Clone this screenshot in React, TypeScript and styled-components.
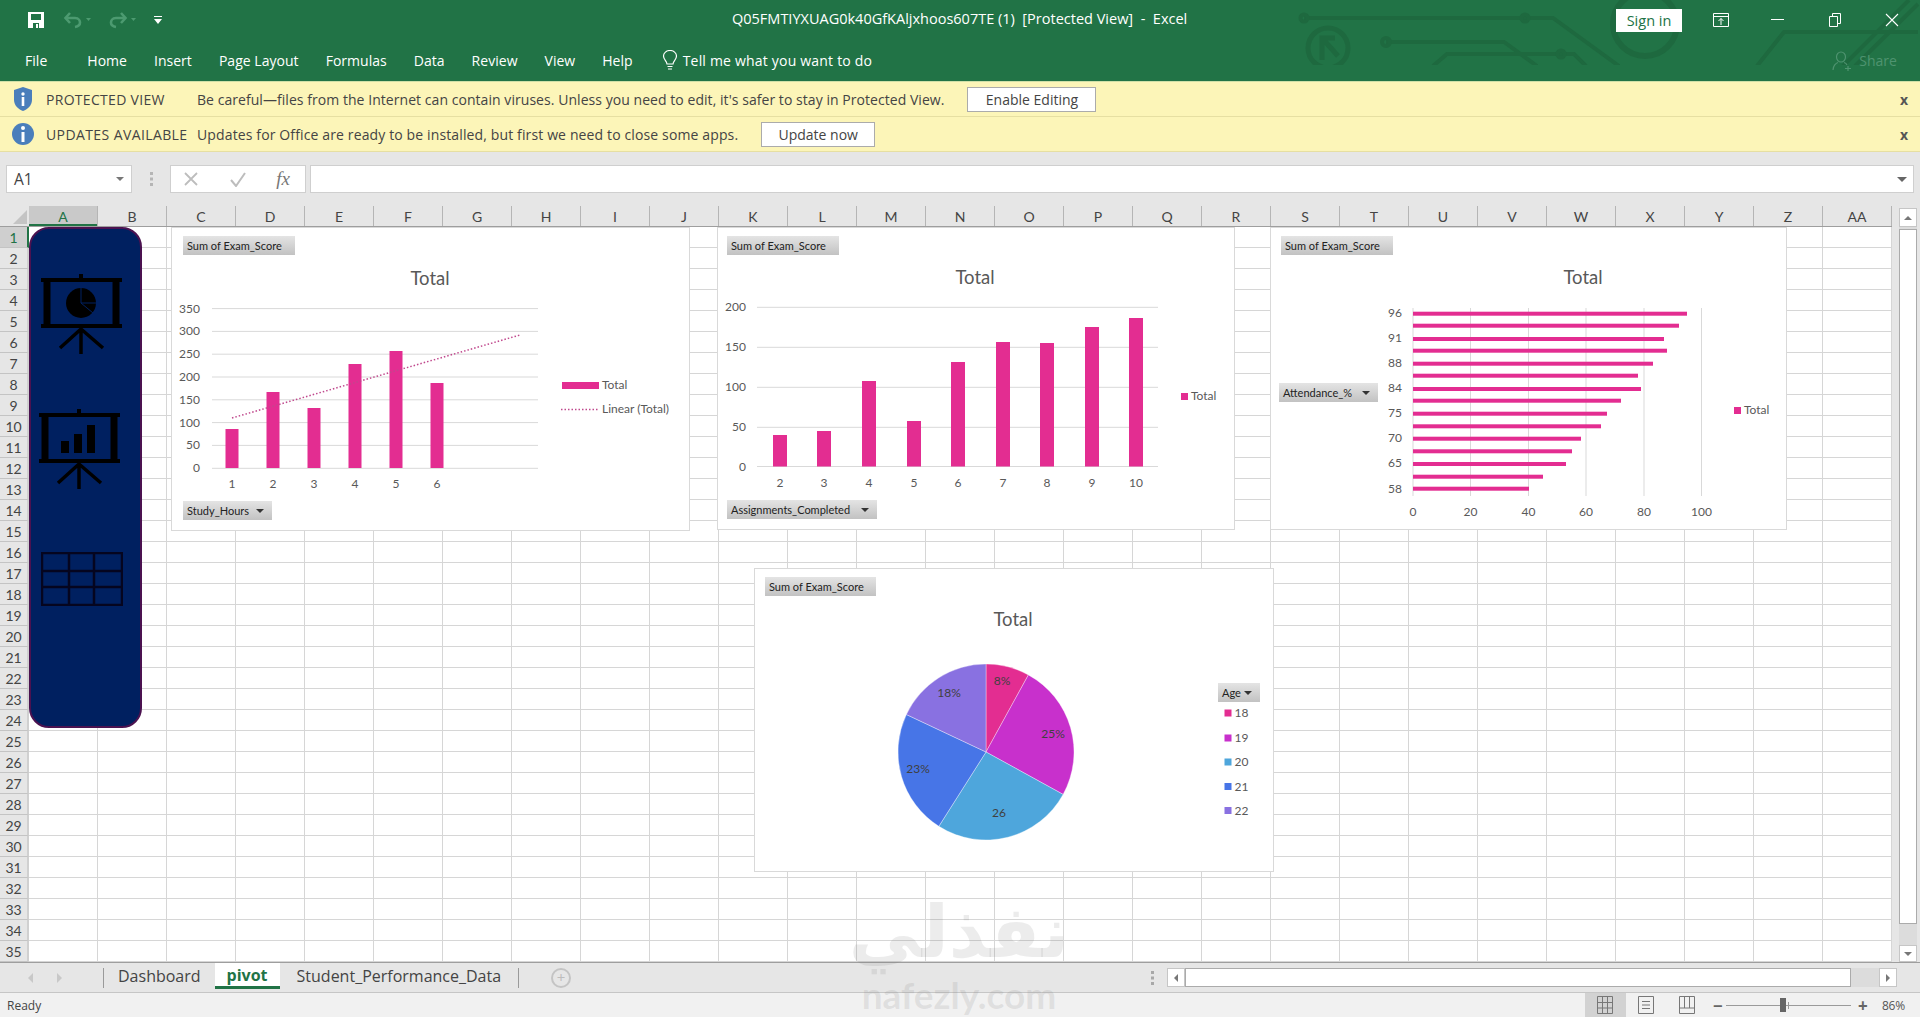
import React from 'react'
import styled, { createGlobalStyle } from 'styled-components'

const UI_FONT = `'Open Sans', 'Noto Sans', sans-serif`
const CELL_FONT = `Lato, 'Liberation Sans', sans-serif`
const PINK = '#e32d91'

const GlobalStyle = createGlobalStyle`
  html, body { margin: 0; padding: 0; background: #e6e6e6; }
  * { box-sizing: border-box; }
`

const Window = styled.div`
  position: relative;
  width: 1920px;
  height: 1017px;
  overflow: hidden;
  display: flex;
  flex-direction: column;
  font-family: ${UI_FONT};
  background: #e6e6e6;
`

/* title bar */
const TitleBar = styled.header`
  position: relative;
  height: 82px;
  flex: none;
  background: #217346;
  border-bottom: 1px solid #cfe0a8;
  color: #fff;
`
const Circuit = styled.svg`
  position: absolute;
  left: 0;
  top: 0;
`
const TopRow = styled.div`
  position: relative;
  height: 40px;
  display: flex;
  align-items: center;
  padding: 0 0 0 27px;
`
const QuickAccess = styled.div`
  width: 300px;
  display: flex;
  align-items: center;
`
const QatGap = styled.span<{ $w: number }>`
  width: ${({ $w }) => $w}px;
`
const WindowTitle = styled.div`
  position: absolute;
  left: 732px;
  top: 9px;
  font-size: 14.5px;
  line-height: 20px;
  white-space: pre;
`
const WindowControls = styled.div`
  margin-left: auto;
  display: flex;
  align-items: center;
`
const SignIn = styled.button`
  width: 66px;
  height: 23px;
  margin-right: 10px;
  padding: 0;
  border: 0;
  background: #fff;
  color: #217346;
  font: 14.5px ${UI_FONT};
`
const WindowButton = styled.div`
  width: 57px;
  height: 40px;
  display: flex;
  align-items: center;
  justify-content: center;
`
const RibbonTabs = styled.nav`
  position: relative;
  height: 41px;
  display: flex;
  align-items: center;
  padding-left: 25px;
  gap: 27px;
  font-size: 14px;
  letter-spacing: 0.03px;
`
const RibbonTab = styled.span<{ $gapAfter?: number }>`
  margin-right: ${({ $gapAfter }) => $gapAfter || 0}px;
`
const TellMe = styled.span`
  display: flex;
  align-items: center;
  gap: 5px;
  margin-left: 2px;
  letter-spacing: 0.2px;
`
const Share = styled.span`
  margin-left: auto;
  margin-right: 23px;
  display: flex;
  align-items: center;
  gap: 4px;
  color: #4f9370;
`

/* message bars */
const MessageBar = styled.div`
  height: 35px;
  flex: none;
  display: flex;
  align-items: center;
  padding-left: 12px;
  background: #fcf5b8;
  border-bottom: 1px solid #e6dfa2;
  color: #444;
  font-size: 14px;
`
const MessageLabel = styled.span<{ $spacing: number }>`
  width: 163px;
  padding-left: 12px;
  font-weight: 500;
  color: #444;
  white-space: nowrap;
  letter-spacing: ${({ $spacing }) => $spacing}px;
`
const MessageText = styled.span<{ $spacing: number }>`
  letter-spacing: ${({ $spacing }) => $spacing}px;
  white-space: nowrap;
`
const MessageButton = styled.button<{ $width: number }>`
  width: ${({ $width }) => $width}px;
  height: 25px;
  margin-left: 23px;
  padding: 0;
  background: #fff;
  border: 1px solid #ababab;
  color: #444;
  font: 14px ${UI_FONT};
`
const MessageClose = styled.span`
  margin-left: auto;
  margin-right: 12px;
  font-weight: 700;
  font-size: 14px;
  color: #555;
`

/* formula bar */
const FormulaRow = styled.div`
  height: 54px;
  flex: none;
  padding: 13px 6px 13px;
  display: flex;
  background: #e6e6e6;
`
const NameBox = styled.div`
  width: 126px;
  display: flex;
  align-items: center;
  justify-content: space-between;
  padding: 0 7px;
  background: #fff;
  border: 1px solid #cfcfcf;
  font-size: 15.5px;
  color: #444;
`
const GripDots = styled.div`
  width: 38px;
  display: flex;
  align-items: center;
  justify-content: center;
`
const FormulaTools = styled.div`
  width: 136px;
  display: flex;
  align-items: center;
  justify-content: space-between;
  padding: 0 15px 0 12px;
  background: #fff;
  border: 1px solid #cfcfcf;
`
const FxLabel = styled.i`
  font: italic 19px 'Liberation Serif', serif;
  color: #777;
`
const FormulaInput = styled.div`
  flex: 1;
  margin-left: 4px;
  display: flex;
  align-items: center;
  justify-content: flex-end;
  padding-right: 6px;
  background: #fff;
  border: 1px solid #cfcfcf;
`
const Caret = styled.span<{ $dir?: 'up' | 'down' | 'left' | 'right'; $color?: string; $size?: number }>`
  display: inline-block;
  width: 0;
  height: 0;
  flex: none;
  ${({ $dir = 'down', $color = '#666', $size = 4 }) => {
    const side = `${$size}px solid transparent`
    const solid = `${$size}px solid ${$color}`
    if ($dir === 'up') return `border-left: ${side}; border-right: ${side}; border-bottom: ${solid};`
    if ($dir === 'left') return `border-top: ${side}; border-bottom: ${side}; border-right: ${solid};`
    if ($dir === 'right') return `border-top: ${side}; border-bottom: ${side}; border-left: ${solid};`
    return `border-left: ${side}; border-right: ${side}; border-top: ${solid};`
  }}
`

/* sheet */
const Sheet = styled.main`
  flex: none;
  height: 756px;
  display: grid;
  grid-template-columns: 29px 1863px 1fr;
  grid-template-rows: 21px 735px;
`
const Corner = styled.div`
  display: flex;
  align-items: flex-end;
  justify-content: flex-end;
  padding: 0 2px 2px 0;
  border-bottom: 1px solid #9e9e9e;
`
const ColumnHeads = styled.div`
  display: grid;
  grid-template-columns: repeat(27, 69px);
  border-bottom: 1px solid #9e9e9e;
`
const ColumnHead = styled.div<{ $active?: boolean }>`
  display: flex;
  align-items: center;
  justify-content: center;
  border-right: 1px solid #b5b5b5;
  font: 14px ${CELL_FONT};
  color: ${({ $active }) => ($active ? '#217346' : '#444')};
  background: ${({ $active }) => ($active ? '#c9c9c9' : '#e6e6e6')};
  box-shadow: ${({ $active }) => ($active ? 'inset 0 -2px 0 #217346' : 'none')};
`
const RowHeads = styled.div`
  display: grid;
  grid-auto-rows: 21px;
`
const RowHead = styled.div<{ $active?: boolean }>`
  display: flex;
  align-items: center;
  justify-content: center;
  padding-top: 1px;
  border-bottom: 1px solid #c4c4c4;
  border-right: 2px solid ${({ $active }) => ($active ? '#217346' : '#d0d0d0')};
  font: 14px ${CELL_FONT};
  color: ${({ $active }) => ($active ? '#217346' : '#444')};
  background: ${({ $active }) => ($active ? '#cfcfcf' : '#e6e6e6')};
`
const Cells = styled.div`
  position: relative;
  overflow: hidden;
  background-color: #fff;
  background-image: linear-gradient(to right, transparent 68px, #d6d6d6 68px),
    linear-gradient(to bottom, transparent 20px, #d6d6d6 20px);
  background-size: 69px 100%, 100% 21px;
`
const NavShape = styled.div`
  position: absolute;
  left: 0;
  top: 0;
  width: 113px;
  height: 501px;
  display: flex;
  flex-direction: column;
  align-items: flex-start;
  padding: 45px 0 0 10px;
  background: #002060;
  border: 2px solid #4b1250;
  border-radius: 20px;
`
const NavIcon = styled.svg<{ $top?: number; $left?: number }>`
  display: block;
  margin-top: ${({ $top }) => $top || 0}px;
  margin-left: ${({ $left }) => $left || 0}px;
`

const ChartFrame = styled.figure<{ $x: number; $y: number; $w: number; $h: number }>`
  position: absolute;
  left: ${({ $x }) => $x - 29}px;
  top: ${({ $y }) => $y - 227}px;
  width: ${({ $w }) => $w}px;
  height: ${({ $h }) => $h}px;
  margin: 0;
  background: #fff;
  border: 1px solid #d9d9d9;
`
const ChartSvg = styled.svg`
  position: absolute;
  left: -1px;
  top: -1px;
  overflow: visible;
  font-family: ${CELL_FONT};
`
const FieldPill = styled.div<{ $x: number; $y: number; $w: number }>`
  position: absolute;
  left: ${({ $x }) => $x}px;
  top: ${({ $y }) => $y}px;
  width: ${({ $w }) => $w}px;
  height: 19px;
  display: flex;
  align-items: center;
  justify-content: space-between;
  padding: 0 8px 0 4px;
  background: linear-gradient(to bottom, #e4e4e4, #c2c2c2);
  font: 11px ${CELL_FONT};
  color: #222;
  white-space: nowrap;
`

/* tab strip */
const TabStrip = styled.div`
  height: 31px;
  flex: none;
  display: flex;
  align-items: center;
  background: #e6e6e6;
  border-top: 1px solid #9e9e9e;
  border-bottom: 1px solid #c6c6c6;
`
const SheetNav = styled.div`
  width: 103px;
  display: flex;
  gap: 24px;
  padding-left: 28px;
`
const StripDivider = styled.span`
  width: 1px;
  height: 20px;
  background: #9a9a9a;
`
const SheetTab = styled.div<{ $active?: boolean; $pad: number }>`
  height: 26px;
  align-self: flex-start;
  display: flex;
  align-items: center;
  padding: 0 ${({ $pad }) => $pad}px;
  background: ${({ $active }) => ($active ? '#fff' : 'transparent')};
  border-bottom: ${({ $active }) => ($active ? '3px solid #217346' : '0')};
  color: ${({ $active }) => ($active ? '#217346' : '#444')};
  font-weight: ${({ $active }) => ($active ? 700 : 400)};
  font-size: 16px;
`
const AddSheet = styled.span`
  width: 20px;
  height: 20px;
  margin-left: 32px;
  display: flex;
  align-items: center;
  justify-content: center;
  border: 2px solid #c4c4c4;
  border-radius: 50%;
  color: #bdbdbd;
  font-size: 15px;
  line-height: 1;
`
const StripGrip = styled.div`
  margin-left: auto;
  margin-right: 13px;
  display: flex;
`
const HScroll = styled.div`
  width: 730px;
  height: 19px;
  margin-right: 23px;
  display: flex;
  background: #dcdcdc;
`
const ScrollButton = styled.div<{ $w?: number; $h?: number }>`
  width: ${({ $w }) => $w || 18}px;
  height: ${({ $h }) => $h || 19}px;
  flex: none;
  display: flex;
  align-items: center;
  justify-content: center;
  background: #fff;
  border: 1px solid #c6c6c6;
`
const HThumb = styled.div`
  width: 666px;
  background: #fff;
  border: 1px solid #ababab;
`
const HTrack = styled.div`
  flex: 1;
`
const VScroll = styled.aside`
  grid-column: 3;
  grid-row: 1 / span 2;
  display: flex;
  flex-direction: column;
  align-items: flex-end;
  padding: 2px 3px 0 0;
`
const VTrack = styled.div`
  width: 18px;
  flex: 1;
  display: flex;
  flex-direction: column;
  background: #dcdcdc;
`
const VThumb = styled.div`
  height: 695px;
  margin-top: 2px;
  background: #fff;
  border: 1px solid #ababab;
`

/* status bar */
const StatusBar = styled.footer`
  flex: none;
  height: 24px;
  display: flex;
  align-items: center;
  padding: 0 15px 0 7px;
  background: #f1f1f1;
  font-size: 12px;
  color: #444;
`
const ViewSwitch = styled.div`
  margin-left: auto;
  display: flex;
  align-self: stretch;
`
const ViewButton = styled.div<{ $active?: boolean }>`
  width: 41px;
  display: flex;
  align-items: center;
  justify-content: center;
  background: ${({ $active }) => ($active ? '#d2d2d2' : 'transparent')};
`
const ZoomControl = styled.div`
  margin-left: 5px;
  display: flex;
  align-items: center;
  gap: 4px;
  color: #555;
`
const ZoomSign = styled.span`
  width: 9px;
  font-size: 17px;
  font-weight: 700;
  line-height: 1;
  text-align: center;
  color: #666;
`
const ZoomTrack = styled.div`
  position: relative;
  width: 125px;
  height: 1px;
  margin: 0 3px 0 0;
  background: #9a9a9a;
`
const ZoomTick = styled.span`
  position: absolute;
  left: 62px;
  top: -3px;
  width: 1px;
  height: 7px;
  background: #9a9a9a;
`
const ZoomThumb = styled.span`
  position: absolute;
  left: 54px;
  top: -7px;
  width: 6px;
  height: 14px;
  background: #666;
`
const ZoomValue = styled.span`
  margin-left: 11px;
  letter-spacing: -0.2px;
`

const Watermark = styled.div`
  position: absolute;
  left: 843px;
  top: 892px;
  width: 232px;
  display: flex;
  flex-direction: column;
  align-items: center;
  pointer-events: none;
`
const WatermarkArabic = styled.div`
  height: 90px;
  font: 700 72px/80px 'DejaVu Sans', sans-serif;
  color: rgba(110, 110, 110, 0.13);
  white-space: nowrap;
`
const WatermarkLatin = styled.div`
  font: 700 37px/26px ${CELL_FONT};
  color: rgba(130, 130, 130, 0.17);
`

const COLUMNS = 'A B C D E F G H I J K L M N O P Q R S T U V W X Y Z AA'.split(' ')
const ROWS = Array.from({ length: 35 }, (_, i) => i + 1)
const TABS = ['Home', 'Insert', 'Page Layout', 'Formulas', 'Data', 'Review', 'View', 'Help']

const SaveIcon = () => (
  <svg width="18" height="18" viewBox="0 0 18 18">
    <path d="M1 1h16v16H1z" fill="#fff" />
    <path d="M4 3h10v6H4zM6 12h6v5H6z" fill="#217346" />
    <path d="M9 13h2v4H9z" fill="#fff" />
  </svg>
)

const HistoryIcon = ({ flip }: { flip?: boolean }) => (
  <svg width="30" height="18" viewBox="0 0 30 18">
    <g fill="none" stroke="#4c9a70" strokeWidth="2.6" transform={flip ? 'translate(20 0) scale(-1 1)' : undefined}>
      <path d="M3 7h9c4 0 5 3 5 4.500 0 2-2 4-5 4.500" />
      <path d="M7 2L2.500 7 7 12" />
    </g>
    <path d="M23 7h5l-2.500 3z" fill="#4c9a70" />
  </svg>
)

const CircuitArt = () => (
  <Circuit width="1920" height="65" viewBox="0 0 1920 65">
    <g fill="none" stroke="#1e693f" strokeWidth="4">
      <path d="M1304 18H1553L1619 66" />
      <circle cx="1304" cy="18" r="3.500" />
      <circle cx="1525" cy="18" r="3.500" />
      <path d="M1386 42H1504L1537 66" />
      <circle cx="1386" cy="42" r="4" />
      <path d="M1433 66L1447 54H1574L1586 66" />
      <circle cx="1561" cy="54" r="3.500" />
      <circle cx="1328" cy="48" r="20" strokeWidth="5" />
      <path d="M1322 60V38H1335M1322 38L1338 56" strokeWidth="5" />
      <circle cx="1645" cy="24" r="32" strokeWidth="6" />
      <path d="M1757 66L1784 32H1918" />
      <path d="M1843 66L1909 0M1855 66L1918 4" />
    </g>
  </Circuit>
)

const Shield = () => (
  <svg width="22" height="26" viewBox="0 0 22 26">
    <path d="M11 1l9 3v10c0 5-4 9-9 11-5-2-9-6-9-11V4z" fill="#4a7ebb" />
    <circle cx="11" cy="8" r="1.700" fill="#fff" />
    <path d="M9.700 11h2.600v9H9.700z" fill="#fff" />
  </svg>
)

const InfoDot = () => (
  <svg width="22" height="24" viewBox="0 0 22 24">
    <circle cx="11" cy="12" r="11" fill="#4a7ebb" />
    <circle cx="11" cy="6" r="2" fill="#fff" />
    <path d="M9.500 10h3v10h-3z" fill="#fff" />
  </svg>
)

const ProjectorFrame = () => (
  <g stroke="#000" fill="none">
    <path d="M40 0v5M0 6h81M0 52h81" strokeWidth="4" />
    <path d="M6 6v46M75 6v46" strokeWidth="7" />
    <path d="M40 52v28M40 55L19 74M40 55L62 74" strokeWidth="3.500" />
  </g>
)

const ChartProjector = () => (
  <NavIcon width="82" height="80" viewBox="0 0 82 80">
    <ProjectorFrame />
    <circle cx="40" cy="29" r="15" fill="#000" />
    <path d="M40 14v15h15M40 29l12 10" stroke="#002060" strokeWidth="1" fill="none" />
  </NavIcon>
)

const BarsProjector = () => (
  <NavIcon $top={55} $left={-2} width="82" height="80" viewBox="0 0 82 80">
    <ProjectorFrame />
    <path d="M22 32h8v12h-8zM35 25h8v19h-8zM48 16h8v28h-8z" fill="#000" />
  </NavIcon>
)

const TableGlyph = () => (
  <NavIcon $top={63} width="82" height="54" viewBox="0 0 82 54">
    <path d="M1 1h80v52H1zM1 19h80M1 35h80M28 1v52M53 1v52" fill="none" stroke="#05051f" strokeWidth="2.500" />
  </NavIcon>
)

const ValueAxisX = ({ x, ticks }: { x: number; ticks: [string, number][] }) => (
  <>
    {ticks.map(([label, y]) => (
      <text key={label} x={x} y={y + 4} textAnchor="end" fontSize="12" fill="#595959">
        {label}
      </text>
    ))}
  </>
)

const ChartTitle = ({ x, y }: { x: number; y: number }) => (
  <text x={x} y={y + 7} textAnchor="middle" fontSize="18.500" fill="#595959">
    Total
  </text>
)

const StudyChart = () => {
  const gridY = [308.6, 331.4, 354.2, 377, 399.8, 422.6, 445.4, 468.3]
  const bars: [number, number][] = [[232, 429], [273, 392], [314, 408], [355, 364], [396, 351], [437, 383]]
  return (
    <ChartFrame $x={171} $y={227} $w={519} $h={304}>
      <ChartSvg width="519" height="304" viewBox="171 227 519 304">
        <ChartTitle x={430} y={278} />
        {gridY.map(y => (
          <line key={y} x1="212" x2="538" y1={y} y2={y} stroke="#d9d9d9" />
        ))}
        {bars.map(([x, top]) => (
          <rect key={x} x={x - 6.5} y={top} width="13" height={468 - top} fill={PINK} />
        ))}
        <line x1="232" y1="418" x2="520" y2="335" stroke="#c0488d" strokeWidth="1.500" strokeDasharray="1.500 2" />
        <ValueAxisX x={200} ticks={['350', '300', '250', '200', '150', '100', '50', '0'].map((t, i) => [t, gridY[i]] as [string, number])} />
        {bars.map(([x], i) => (
          <text key={x} x={x} y="488" textAnchor="middle" fontSize="12" fill="#595959">
            {i + 1}
          </text>
        ))}
        <rect x="562" y="382" width="37" height="7" fill={PINK} />
        <text x="602" y="389" fontSize="12" fill="#595959">Total</text>
        <line x1="561" x2="599" y1="409.500" y2="409.500" stroke="#c0488d" strokeWidth="1.500" strokeDasharray="1.500 2" />
        <text x="602" y="413" fontSize="12" fill="#595959">Linear (Total)</text>
      </ChartSvg>
      <FieldPill $x={11} $y={8} $w={112}>Sum of Exam_Score</FieldPill>
      <FieldPill $x={11} $y={273} $w={89}>
        Study_Hours <Caret $color="#333" />
      </FieldPill>
    </ChartFrame>
  )
}

const AssignmentsChart = () => {
  const gridY = [307.3, 347.3, 387.3, 427.3, 466.5]
  const bars: [number, number][] = [
    [780, 435], [824, 431], [869, 381], [914, 421], [958, 362], [1003, 342], [1047, 343], [1092, 327], [1136, 318],
  ]
  return (
    <ChartFrame $x={717} $y={227} $w={518} $h={303}>
      <ChartSvg width="518" height="303" viewBox="717 227 518 303">
        <ChartTitle x={975} y={277} />
        {gridY.map(y => (
          <line key={y} x1="757" x2="1158" y1={y} y2={y} stroke="#d9d9d9" />
        ))}
        {bars.map(([x, top]) => (
          <rect key={x} x={x - 7} y={top} width="14" height={466.500 - top} fill={PINK} />
        ))}
        <ValueAxisX x={746} ticks={['200', '150', '100', '50', '0'].map((t, i) => [t, gridY[i]] as [string, number])} />
        {bars.map(([x], i) => (
          <text key={x} x={x} y="487" textAnchor="middle" fontSize="12" fill="#595959">
            {i + 2}
          </text>
        ))}
        <rect x="1181" y="393" width="7" height="7" fill={PINK} />
        <text x="1191" y="400" fontSize="12" fill="#595959">Total</text>
      </ChartSvg>
      <FieldPill $x={9} $y={8} $w={112}>Sum of Exam_Score</FieldPill>
      <FieldPill $x={9} $y={272} $w={150}>
        Assignments_Completed <Caret $color="#333" />
      </FieldPill>
    </ChartFrame>
  )
}

const AttendanceChart = () => {
  const gridX = [1413, 1470.5, 1528.5, 1586, 1644, 1701.5]
  const bars: [number, number][] = [
    [313.7, 1687], [325.7, 1679], [339, 1664], [350.7, 1667], [363.7, 1653], [375.7, 1638], [389, 1641], [400.7, 1621],
    [413.7, 1607], [426.3, 1601], [438.7, 1581], [451.3, 1572], [464, 1566], [476.7, 1543], [488.7, 1529],
  ]
  const labels: [string, number][] = [
    ['96', 313], ['91', 338], ['88', 363], ['84', 388], ['75', 413], ['70', 438], ['65', 463], ['58', 489],
  ]
  return (
    <ChartFrame $x={1270} $y={227} $w={517} $h={303}>
      <ChartSvg width="517" height="303" viewBox="1270 227 517 303">
        <ChartTitle x={1583} y={277} />
        {gridX.map(x => (
          <line key={x} x1={x} x2={x} y1="308" y2="496" stroke="#d9d9d9" />
        ))}
        {bars.map(([y, end]) => (
          <rect key={y} x="1413" y={y - 2} width={end - 1413} height="4" fill={PINK} />
        ))}
        <ValueAxisX x={1402} ticks={labels} />
        {gridX.map((x, i) => (
          <text key={x} x={x} y="516" textAnchor="middle" fontSize="12" fill="#595959">
            {i * 20}
          </text>
        ))}
        <rect x="1734" y="407" width="7" height="7" fill={PINK} />
        <text x="1744" y="414" fontSize="12" fill="#595959">Total</text>
      </ChartSvg>
      <FieldPill $x={10} $y={8} $w={112}>Sum of Exam_Score</FieldPill>
      <FieldPill $x={8} $y={155} $w={99}>
        Attendance_% <Caret $color="#333" />
      </FieldPill>
    </ChartFrame>
  )
}

const PIE = [
  { age: 18, share: 8, color: '#e32d91' },
  { age: 19, share: 25, color: '#c830cc' },
  { age: 20, share: 26, color: '#4ea6dc' },
  { age: 21, share: 23, color: '#4775e7' },
  { age: 22, share: 18, color: '#8971e1' },
]

const sliceLabels: [string, number, number][] = [
  ['8%', 1002, 681], ['25%', 1053, 734], ['26', 999, 813], ['23%', 918, 769], ['18%', 949, 693],
]

const slicePath = (from: number, to: number) => {
  const [cx, cy, r] = [986, 752, 88]
  const pt = (pct: number) => {
    const a = (pct / 100) * Math.PI * 2
    return `${cx + r * Math.sin(a)} ${cy - r * Math.cos(a)}`
  }
  return `M${cx} ${cy}L${pt(from)}A${r} ${r} 0 ${to - from > 50 ? 1 : 0} 1 ${pt(to)}Z`
}

const AgeChart = () => {
  let start = 0
  return (
    <ChartFrame $x={754} $y={568} $w={520} $h={304}>
      <ChartSvg width="520" height="304" viewBox="754 568 520 304">
        <ChartTitle x={1013} y={619} />
        {PIE.map(({ age, share, color }) => {
          const d = slicePath(start, start + share)
          start += share
          return <path key={age} d={d} fill={color} stroke="#fff" strokeOpacity="0.5" strokeWidth="0.7" />
        })}
        {sliceLabels.map(([label, x, y]) => (
          <text key={label} x={x} y={y + 4} textAnchor="middle" fontSize="12" fill="#404040">
            {label}
          </text>
        ))}
        {PIE.map(({ age, color }, i) => {
          const y = [713, 738, 762, 786.5, 810.5][i]
          return (
            <g key={age}>
              <rect x="1224.500" y={y - 3.500} width="7" height="7" fill={color} />
              <text x="1234.500" y={y + 4} fontSize="12" fill="#595959">{age}</text>
            </g>
          )
        })}
      </ChartSvg>
      <FieldPill $x={10} $y={8} $w={111}>Sum of Exam_Score</FieldPill>
      <FieldPill $x={463} $y={114} $w={42}>
        Age <Caret $color="#333" />
      </FieldPill>
    </ChartFrame>
  )
}

const Grip = ({ color }: { color: string }) => (
  <svg width="3" height="14" viewBox="0 0 3 14">
    <path d="M0 0h3v3H0zM0 5.500h3v3H0zM0 11h3v3H0z" fill={color} />
  </svg>
)

export default function App() {
  return (
    <Window>
      <GlobalStyle />
      <TitleBar>
        <CircuitArt />
        <TopRow>
          <QuickAccess>
            <SaveIcon />
            <QatGap $w={18} />
            <HistoryIcon />
            <QatGap $w={15} />
            <HistoryIcon flip />
            <QatGap $w={16} />
            <svg width="8" height="10" viewBox="0 0 8 10">
              <path d="M0 1h8v1H0zM0 4h8L4 9z" fill="#fff" />
            </svg>
          </QuickAccess>
          <WindowTitle>{'Q05FMTIYXUAG0k40GfKAljxhoos607TE (1)  [Protected View]  -  Excel'}</WindowTitle>
          <WindowControls>
            <SignIn>Sign in</SignIn>
            <WindowButton>
              <svg width="16" height="14" viewBox="0 0 16 14" fill="none" stroke="#fff">
                <path d="M.5.500h15v13H.5zM.5 3.500h15M8 12V5.500M5.500 8L8 5.500 10.500 8" />
              </svg>
            </WindowButton>
            <WindowButton>
              <svg width="13" height="2" viewBox="0 0 13 2"><path d="M0 .5h13" stroke="#fff" /></svg>
            </WindowButton>
            <WindowButton>
              <svg width="12" height="14" viewBox="0 0 12 14" fill="none" stroke="#fff">
                <path d="M.5 3.500h8v10h-8zM3.500 3.500v-3h8v10h-3" />
              </svg>
            </WindowButton>
            <WindowButton>
              <svg width="14" height="14" viewBox="0 0 14 14"><path d="M1 1l12 12M13 1L1 13" stroke="#fff" strokeWidth="1.100" /></svg>
            </WindowButton>
          </WindowControls>
        </TopRow>
        <RibbonTabs>
          <RibbonTab $gapAfter={13}>File</RibbonTab>
          {TABS.map(tab => (
            <RibbonTab key={tab}>{tab}</RibbonTab>
          ))}
          <TellMe>
            <svg width="16" height="21" viewBox="0 0 16 21" fill="none" stroke="#fff" strokeWidth="1.200">
              <path d="M5 14c0-3-3.500-4-3.500-8a6.500 5.500 0 0 1 13 0c0 4-3.500 5-3.500 8zM5.500 16.500h5M6 19h4" />
            </svg>
            Tell me what you want to do
          </TellMe>
          <Share>
            <svg width="24" height="20" viewBox="0 0 24 20" fill="none" stroke="#4f9370" strokeWidth="1.200">
              <ellipse cx="10" cy="6" rx="4.500" ry="5" />
              <path d="M2 19c0-4 3-7 5-7.500M13 11.500c1.500.5 2.500 1.500 3 2.500M17 15v5M14 17.500h6" />
            </svg>
            Share
          </Share>
        </RibbonTabs>
      </TitleBar>

      <MessageBar>
        <Shield />
        <MessageLabel $spacing={0.3}>PROTECTED VIEW</MessageLabel>
        <MessageText $spacing={0.05}>
          Be careful—files from the Internet can contain viruses. Unless you need to edit, it's safer to stay in Protected View.
        </MessageText>
        <MessageButton $width={129}>Enable Editing</MessageButton>
        <MessageClose>x</MessageClose>
      </MessageBar>
      <MessageBar>
        <InfoDot />
        <MessageLabel $spacing={0.4}>UPDATES AVAILABLE</MessageLabel>
        <MessageText $spacing={0.13}>
          Updates for Office are ready to be installed, but first we need to close some apps.
        </MessageText>
        <MessageButton $width={114}>Update now</MessageButton>
        <MessageClose>x</MessageClose>
      </MessageBar>

      <FormulaRow>
        <NameBox>
          A1 <Caret $color="#777" />
        </NameBox>
        <GripDots>
          <Grip color="#b5b5b5" />
        </GripDots>
        <FormulaTools>
          <svg width="16" height="16" viewBox="0 0 16 16"><path d="M2 2l12 12M14 2L2 14" stroke="#bdbdbd" strokeWidth="1.800" /></svg>
          <svg width="18" height="16" viewBox="0 0 18 16"><path d="M2 9l5 6L16 2" stroke="#bdbdbd" strokeWidth="2" fill="none" /></svg>
          <FxLabel>fx</FxLabel>
        </FormulaTools>
        <FormulaInput>
          <Caret $color="#666" $size={5} />
        </FormulaInput>
      </FormulaRow>

      <Sheet>
        <Corner>
          <svg width="14" height="14" viewBox="0 0 14 14"><path d="M14 0v14H0z" fill="#c4c4c4" /></svg>
        </Corner>
        <ColumnHeads>
          {COLUMNS.map(col => (
            <ColumnHead key={col} $active={col === 'A'}>{col}</ColumnHead>
          ))}
        </ColumnHeads>
        <RowHeads>
          {ROWS.map(row => (
            <RowHead key={row} $active={row === 1}>{row}</RowHead>
          ))}
        </RowHeads>
        <Cells>
          <NavShape>
            <ChartProjector />
            <BarsProjector />
            <TableGlyph />
          </NavShape>
          <StudyChart />
          <AssignmentsChart />
          <AttendanceChart />
          <AgeChart />
        </Cells>
        <VScroll>
          <ScrollButton><Caret $dir="up" $color="#777" /></ScrollButton>
          <VTrack>
            <VThumb />
          </VTrack>
          <ScrollButton $h={17}><Caret $color="#777" /></ScrollButton>
        </VScroll>
      </Sheet>

      <TabStrip>
        <SheetNav>
          <Caret $dir="left" $color="#c8c8c8" $size={5} />
          <Caret $dir="right" $color="#c8c8c8" $size={5} />
        </SheetNav>
        <StripDivider />
        <SheetTab $pad={14}>Dashboard</SheetTab>
        <SheetTab $pad={12} $active>pivot</SheetTab>
        <SheetTab $pad={17}>Student_Performance_Data</SheetTab>
        <StripDivider />
        <AddSheet>+</AddSheet>
        <StripGrip>
          <Grip color="#a8a8a8" />
        </StripGrip>
        <HScroll>
          <ScrollButton><Caret $dir="left" $color="#777" /></ScrollButton>
          <HThumb />
          <HTrack />
          <ScrollButton><Caret $dir="right" $color="#777" /></ScrollButton>
        </HScroll>
      </TabStrip>

      <StatusBar>
        Ready
        <ViewSwitch>
          <ViewButton $active>
            <svg width="16" height="18" viewBox="0 0 16 18" fill="none" stroke="#777">
              <path d="M.5.500h15v17H.5zM.5 6.500h15M.5 12h15M5.500.5v17M10.500.5v17" />
            </svg>
          </ViewButton>
          <ViewButton>
            <svg width="16" height="18" viewBox="0 0 16 18" fill="none" stroke="#777">
              <path d="M.5.500h15v17H.5zM4 5.500h8M4 9h8M4 12.500h8" />
            </svg>
          </ViewButton>
          <ViewButton>
            <svg width="16" height="18" viewBox="0 0 16 18" fill="none" stroke="#777">
              <path d="M.5.500h15v17H.5zM.5 12h15M5.500.5V12M10.500.5V12" />
            </svg>
          </ViewButton>
        </ViewSwitch>
        <ZoomControl>
          <ZoomSign>−</ZoomSign>
          <ZoomTrack>
            <ZoomTick />
            <ZoomThumb />
          </ZoomTrack>
          <ZoomSign>+</ZoomSign>
          <ZoomValue>86%</ZoomValue>
        </ZoomControl>
      </StatusBar>

      <Watermark>
        <WatermarkArabic>نفذلي</WatermarkArabic>
        <WatermarkLatin>nafezly.com</WatermarkLatin>
      </Watermark>
    </Window>
  )
}
